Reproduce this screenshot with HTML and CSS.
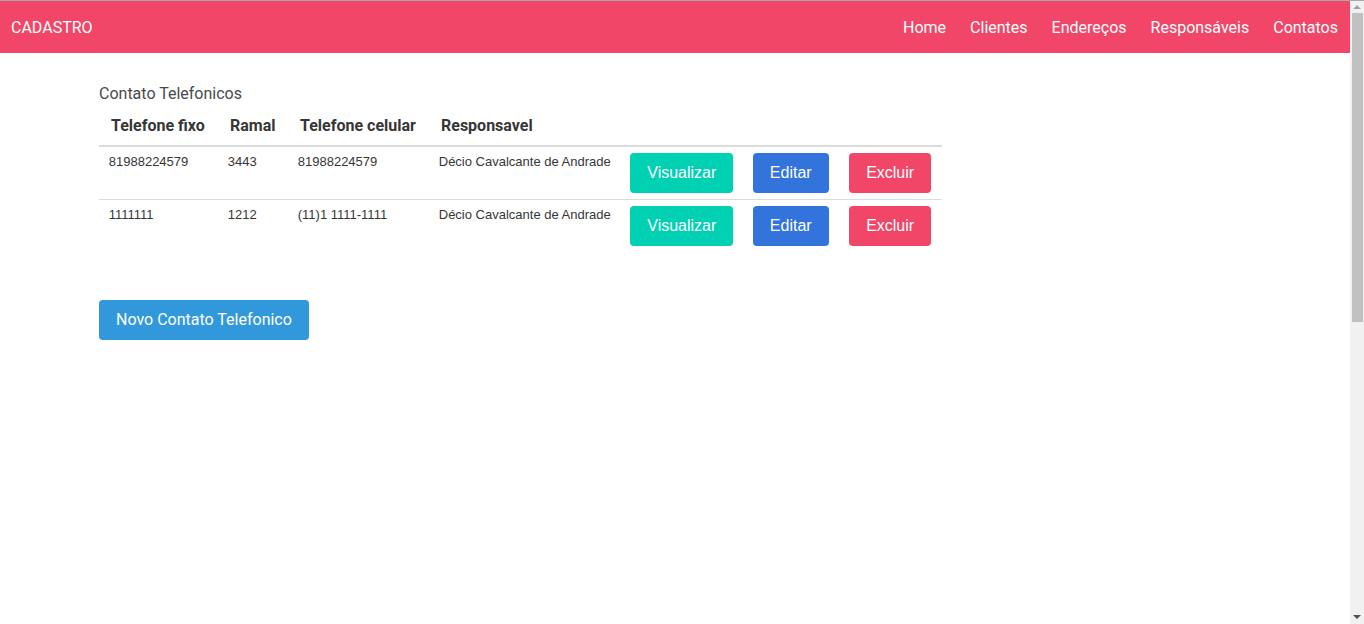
FILE: index.html
```html
<!DOCTYPE html>
<html lang="pt-BR">
<head>
<meta charset="utf-8">
<title>Cadastro</title>
<link rel="stylesheet" href="styles.css">
</head>
<body>
<div class="page">
  <nav class="navbar">
    <a class="brand" href="#">CADASTRO</a>
    <div class="menu">
      <a class="nav-item" href="#">Home</a>
      <a class="nav-item" href="#">Clientes</a>
      <a class="nav-item" href="#">Endereços</a>
      <a class="nav-item" href="#">Responsáveis</a>
      <a class="nav-item" href="#">Contatos</a>
    </div>
  </nav>
  <main class="container">
    <p class="title">Contato Telefonicos</p>
    <table class="table">
      <thead>
        <tr>
          <th class="c1">Telefone fixo</th>
          <th class="c2">Ramal</th>
          <th class="c3">Telefone celular</th>
          <th class="c4">Responsavel</th>
          <th></th>
          <th></th>
          <th></th>
        </tr>
      </thead>
      <tbody>
        <tr>
          <td>81988224579</td>
          <td>3443</td>
          <td>81988224579</td>
          <td>Décio Cavalcante de Andrade</td>
          <td><a class="btn btn-primary" href="#">Visualizar</a></td>
          <td class="act-edit"><a class="btn btn-link" href="#">Editar</a></td>
          <td class="act-del"><a class="btn btn-danger" href="#">Excluir</a></td>
        </tr>
        <tr>
          <td>1111111</td>
          <td>1212</td>
          <td>(11)1 1111-1111</td>
          <td>Décio Cavalcante de Andrade</td>
          <td><a class="btn btn-primary" href="#">Visualizar</a></td>
          <td class="act-edit"><a class="btn btn-link" href="#">Editar</a></td>
          <td class="act-del"><a class="btn btn-danger" href="#">Excluir</a></td>
        </tr>
      </tbody>
    </table>
    <a class="btn btn-info btn-new" href="#">Novo Contato Telefonico</a>
  </main>
</div>
<div class="scrollbar" aria-hidden="true">
  <span class="sb-arrow sb-up"></span>
  <span class="sb-thumb"></span>
  <span class="sb-arrow sb-down"></span>
</div>
</body>
</html>
```
FILE: styles.css
```css
html, body {
  margin: 0;
  padding: 0;
}
body {
  font-family: Roboto, "Liberation Sans", sans-serif;
  font-size: 16px;
  line-height: 24px;
  color: #4a4a4a;
  background: #fff;
  border-top: 1px solid #a8a8a8;
}
.page {
  min-height: 1203px;
  margin-right: 14px;
}
.navbar {
  height: 52px;
  background: #f14668;
  display: flex;
  align-items: center;
  justify-content: space-between;
}
.brand, .nav-item {
  color: #fff;
  text-decoration: none;
  padding: 9px 12px 7px;
}
.brand {
  padding-left: 11px;
}
.menu {
  display: flex;
}
.container {
  width: 1152px;
  margin: 0 auto;
  padding-top: 29px;
}
.title {
  margin: 0;
  line-height: 24px;
  color: #4a4a4a;
}
.table {
  border-collapse: collapse;
  border-spacing: 0;
  margin-bottom: 48px;
}
.table th {
  color: #363636;
  font-weight: 700;
  text-align: left;
  padding: 8px 12px 7px;
  line-height: 24px;
  border-bottom: 2px solid #dbdbdb;
}
.table .c1 { width: 95px; }
.table .c2 { width: 46px; }
.table .c3 { width: 117px; }
.table td {
  font-family: "Liberation Sans", Arial, sans-serif;
  font-size: 13px;
  line-height: 17.5px;
  padding: 6px 9.75px;
  vertical-align: top;
  color: #363636;
  border-bottom: 1px solid #dbdbdb;
}
.table td.act-edit {
  padding-right: 10.75px;
}
.table td.act-del {
  padding-right: 11px;
}
.table tbody tr:last-child td {
  border-bottom: 0;
}
.btn {
  display: inline-flex;
  vertical-align: top;
  align-items: center;
  justify-content: center;
  box-sizing: border-box;
  height: 40px;
  padding: 0 16px;
  border: 1px solid transparent;
  border-radius: 4px;
  color: #fff;
  text-decoration: none;
  font-size: 16px;
  line-height: 24px;
  white-space: nowrap;
}
.table .btn {
  font-family: "Liberation Sans", Arial, sans-serif;
}
.btn-primary { background: #00d1b2; }
.btn-link { background: #3273dc; }
.btn-danger { background: #f14668; }
.btn-info { background: #3298dc; }
.btn-new {
  font-family: Roboto, sans-serif;
}

/* browser scrollbar, drawn over the right edge */
.scrollbar {
  position: fixed;
  top: 1px;
  right: 0;
  bottom: 0;
  width: 14px;
  background: #f1f1f1;
  display: flex;
  flex-direction: column;
  align-items: center;
}
.sb-arrow {
  width: 0;
  height: 0;
  border-left: 4px solid transparent;
  border-right: 4px solid transparent;
  flex: none;
}
.sb-up {
  margin-top: 4px;
  border-bottom: 4px solid #a3a3a3;
}
.sb-thumb {
  width: 11px;
  height: 309px;
  margin-top: 4px;
  margin-left: 1px;
  background: #c1c1c1;
  flex: none;
}
.sb-down {
  margin-top: auto;
  margin-bottom: 5px;
  border-top: 4px solid #505050;
}
```
